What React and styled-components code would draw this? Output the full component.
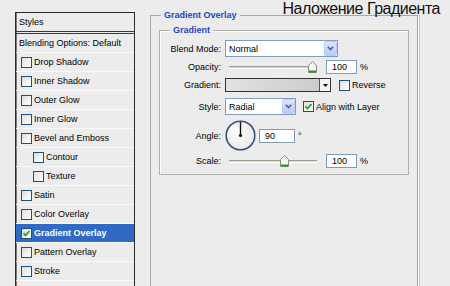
import React from "react";
import styled, { createGlobalStyle } from "styled-components";

const GlobalStyle = createGlobalStyle`
  html, body {
    margin: 0;
    padding: 0;
    background: #ececec;
    overflow: hidden;
  }
  body {
    font-family: "Liberation Sans", Arial, sans-serif;
    font-size: 9px;
    color: #000;
  }
`;

const Page = styled.div`
  position: relative;
  display: flex;
  align-items: flex-start;
  width: 450px;
  height: 286px;
  padding: 12px 0 0 15px;
  box-sizing: border-box;
`;

const Title = styled.div`
  position: absolute;
  top: 0;
  right: 10px;
  font-family: "Liberation Sans", Arial, sans-serif;
  font-size: 16px;
  letter-spacing: -0.5px;
  line-height: 18px;
  color: #111;
`;

/* ---- left style list ---- */
const Panel = styled.div`
  width: 120px;
  height: 300px;
  box-sizing: border-box;
  border: 1px solid #2b2b2b;
  box-shadow: inset 1px 0 0 #7a7a7a;
  background: #ececec;
`;

const PanelHead = styled.div`
  height: 21px;
  box-sizing: border-box;
  padding-left: 3px;
  display: flex;
  align-items: center;
  border-bottom: 3px double #3a3a3a;
`;

const PanelRow = styled.div`
  height: 19px;
  box-sizing: border-box;
  display: flex;
  align-items: center;
  gap: 2px;
  padding-left: ${(p) => (p.$plain ? 3 : p.$indent ? 17 : 5)}px;
  border-bottom: 1px solid #fafafa;
  background: ${(p) => (p.$active ? "#316ac5" : "transparent")};
  color: ${(p) => (p.$active ? "#fff" : "#000")};
  font-weight: ${(p) => (p.$active ? "bold" : "normal")};
  white-space: nowrap;
`;

/* ---- checkbox ---- */
const Box = styled.span`
  width: 11px;
  height: 11px;
  box-sizing: border-box;
  border: 1px solid #1c5180;
  background: linear-gradient(135deg, #dcdcd7 0%, #f4f4f2 60%, #fff 100%);
  display: inline-flex;
  align-items: center;
  justify-content: center;
  flex: none;
`;

function Check({ checked }) {
  return (
    <Box>
      {checked && (
        <svg width="7" height="7" viewBox="0 0 7 7">
          <path d="M0.5 3.5 L2.5 5.5 L6.5 1" fill="none" stroke="#21a121" strokeWidth="1.8" />
        </svg>
      )}
    </Box>
  );
}

/* ---- right side group boxes ---- */
const Outer = styled.fieldset`
  margin: -2px 0 0 15px;
  padding: 0 0 0 8px;
  width: 268px;
  height: 300px;
  box-sizing: border-box;
  border: 1px solid #a8a89f;
  box-shadow: 1px 0 0 #fff, 2px 0 0 #c9c9c0;
`;

const Legend = styled.legend`
  padding: 0 3px;
  margin-left: ${(p) => p.$offset}px;
  font-weight: bold;
  color: #1446c8;
  font-size: 9px;
  line-height: 10px;
`;

const Inner = styled.fieldset`
  margin: 5px 0 0 0;
  padding: 5px 0 6px 0;
  width: 250px;
  box-sizing: border-box;
  border: 1px solid #b0b0a8;
  box-shadow: inset 1px 1px 0 #fff;
`;

const Row = styled.div`
  display: flex;
  align-items: center;
  height: ${(p) => p.$h}px;
  margin-top: ${(p) => p.$top}px;
  white-space: nowrap;
`;

const Label = styled.span`
  width: 61px;
  margin-right: 4px;
  text-align: right;
  flex: none;
`;

const Select = styled.div`
  width: ${(p) => p.$w}px;
  height: 17px;
  box-sizing: border-box;
  border: 1px solid #7f9db9;
  background: #fff;
  display: flex;
  align-items: center;
  padding-left: 3px;
  flex: none;
`;

const SelectText = styled.span`
  flex: 1;
`;

const Chevron = styled.span`
  width: 13px;
  height: 15px;
  box-sizing: border-box;
  border: 1px solid #b9cdf7;
  border-radius: 2px;
  background: linear-gradient(#dbe6fd, #b7cbf6);
  display: flex;
  align-items: center;
  justify-content: center;
`;

const Slider = styled.div`
  position: relative;
  width: 92px;
  margin-left: 4px;
  height: 14px;
  flex: none;
`;

const Track = styled.div`
  position: absolute;
  left: 0;
  right: 4px;
  top: 6px;
  height: 3px;
  box-sizing: border-box;
  border-top: 1px solid #9d9d92;
  border-bottom: 1px solid #fff;
  background: #d6d6cf;
`;

const Thumb = styled.svg`
  position: absolute;
  top: 1px;
`;

const Field = styled.div`
  width: ${(p) => p.$w}px;
  height: 14px;
  margin-left: ${(p) => p.$ml}px;
  box-sizing: border-box;
  border: 1px solid #7f9db9;
  background: #fff;
  padding-left: 5px;
  display: flex;
  align-items: center;
  flex: none;
`;

const Unit = styled.span`
  margin-left: 3px;
`;

const GradientBox = styled.div`
  width: 106px;
  height: 14px;
  box-sizing: border-box;
  border: 1px solid #333;
  background: linear-gradient(90deg, #e2e2e2, #c9c9c9);
  display: flex;
  justify-content: flex-end;
  flex: none;
`;

const GradArrow = styled.span`
  width: 10px;
  height: 100%;
  border-left: 1px solid #555;
  background: #f3f3f3;
  display: flex;
  align-items: center;
  justify-content: center;
`;

const CheckLabel = styled.label`
  display: flex;
  align-items: center;
  gap: 2px;
  margin-left: ${(p) => p.$ml}px;
`;

function SliderCtl({ value, max }) {
  const x = ((value - 1) / (max - 1)) * 83;
  return (
    <Slider>
      <Track />
      <Thumb width="9" height="12" viewBox="0 0 9 12" style={{ left: x - 4.5 }}>
        <path d="M0.5 4.5 L4.5 0.5 L8.5 4.5 L8.5 11.5 L0.5 11.5 Z" fill="#f6f6f2" stroke="#8a8a80" />
        <path d="M1 10.5 H8" stroke="#21a121" strokeWidth="2" />
      </Thumb>
    </Slider>
  );
}

function Dropdown({ w, text }) {
  return (
    <Select $w={w}>
      <SelectText>{text}</SelectText>
      <Chevron>
        <svg width="7" height="5" viewBox="0 0 7 5">
          <path d="M0.8 0.8 L3.5 3.6 L6.2 0.8" fill="none" stroke="#4d6185" strokeWidth="1.6" />
        </svg>
      </Chevron>
    </Select>
  );
}

function Dial() {
  return (
    <svg width="31" height="31" viewBox="0 0 31 31">
      <defs>
        <radialGradient id="dialFill" cx="0.4" cy="0.4" r="0.7">
          <stop offset="0" stopColor="#ffffff" />
          <stop offset="1" stopColor="#e6e6e6" />
        </radialGradient>
      </defs>
      <circle cx="15.5" cy="15.5" r="14.3" fill="url(#dialFill)" stroke="#3b4f7a" strokeWidth="1.6" />
      <line x1="15.5" y1="15.5" x2="15.5" y2="2" stroke="#111" strokeWidth="1.4" />
      <circle cx="15.5" cy="15.5" r="1.6" fill="#111" />
    </svg>
  );
}

const effects = [
  { name: "Drop Shadow" },
  { name: "Inner Shadow" },
  { name: "Outer Glow" },
  { name: "Inner Glow" },
  { name: "Bevel and Emboss" },
  { name: "Contour", indent: true },
  { name: "Texture", indent: true },
  { name: "Satin" },
  { name: "Color Overlay" },
  { name: "Gradient Overlay", active: true },
  { name: "Pattern Overlay" },
  { name: "Stroke" },
];

export default function App() {
  return (
    <>
      <GlobalStyle />
      <Page>
        <Panel>
          <PanelHead>Styles</PanelHead>
          <PanelRow $plain>Blending Options: Default</PanelRow>
          {effects.map((e) => (
            <PanelRow key={e.name} $indent={e.indent} $active={e.active}>
              <Check checked={e.active} />
              {e.name}
            </PanelRow>
          ))}
        </Panel>

        <Outer>
          <Legend $offset={2}>Gradient Overlay</Legend>
          <Inner>
            <Legend $offset={10}>Gradient</Legend>
            <Row $h={17} $top={0}>
              <Label>Blend Mode:</Label>
              <Dropdown w={113} text="Normal" />
            </Row>
            <Row $h={14} $top={3}>
              <Label>Opacity:</Label>
              <SliderCtl value={100} max={100} />
              <Field $w={31} $ml={5}>100</Field>
              <Unit>%</Unit>
            </Row>
            <Row $h={14} $top={4}>
              <Label>Gradient:</Label>
              <GradientBox>
                <GradArrow>
                  <svg width="5" height="3" viewBox="0 0 5 3">
                    <path d="M0 0 H5 L2.5 3 Z" fill="#000" />
                  </svg>
                </GradArrow>
              </GradientBox>
              <CheckLabel $ml={8}>
                <Check />
                Reverse
              </CheckLabel>
            </Row>
            <Row $h={17} $top={6}>
              <Label>Style:</Label>
              <Dropdown w={71} text="Radial" />
              <CheckLabel $ml={7}>
                <Check checked />
                Align with Layer
              </CheckLabel>
            </Row>
            <Row $h={31} $top={5}>
              <Label>Angle:</Label>
              <Dial />
              <Field $w={36} $ml={3}>90</Field>
              <Unit>°</Unit>
            </Row>
            <Row $h={14} $top={3}>
              <Label>Scale:</Label>
              <SliderCtl value={100} max={150} />
              <Field $w={31} $ml={5}>100</Field>
              <Unit>%</Unit>
            </Row>
          </Inner>
        </Outer>

        <Title>Наложение Градиента</Title>
      </Page>
    </>
  );
}
